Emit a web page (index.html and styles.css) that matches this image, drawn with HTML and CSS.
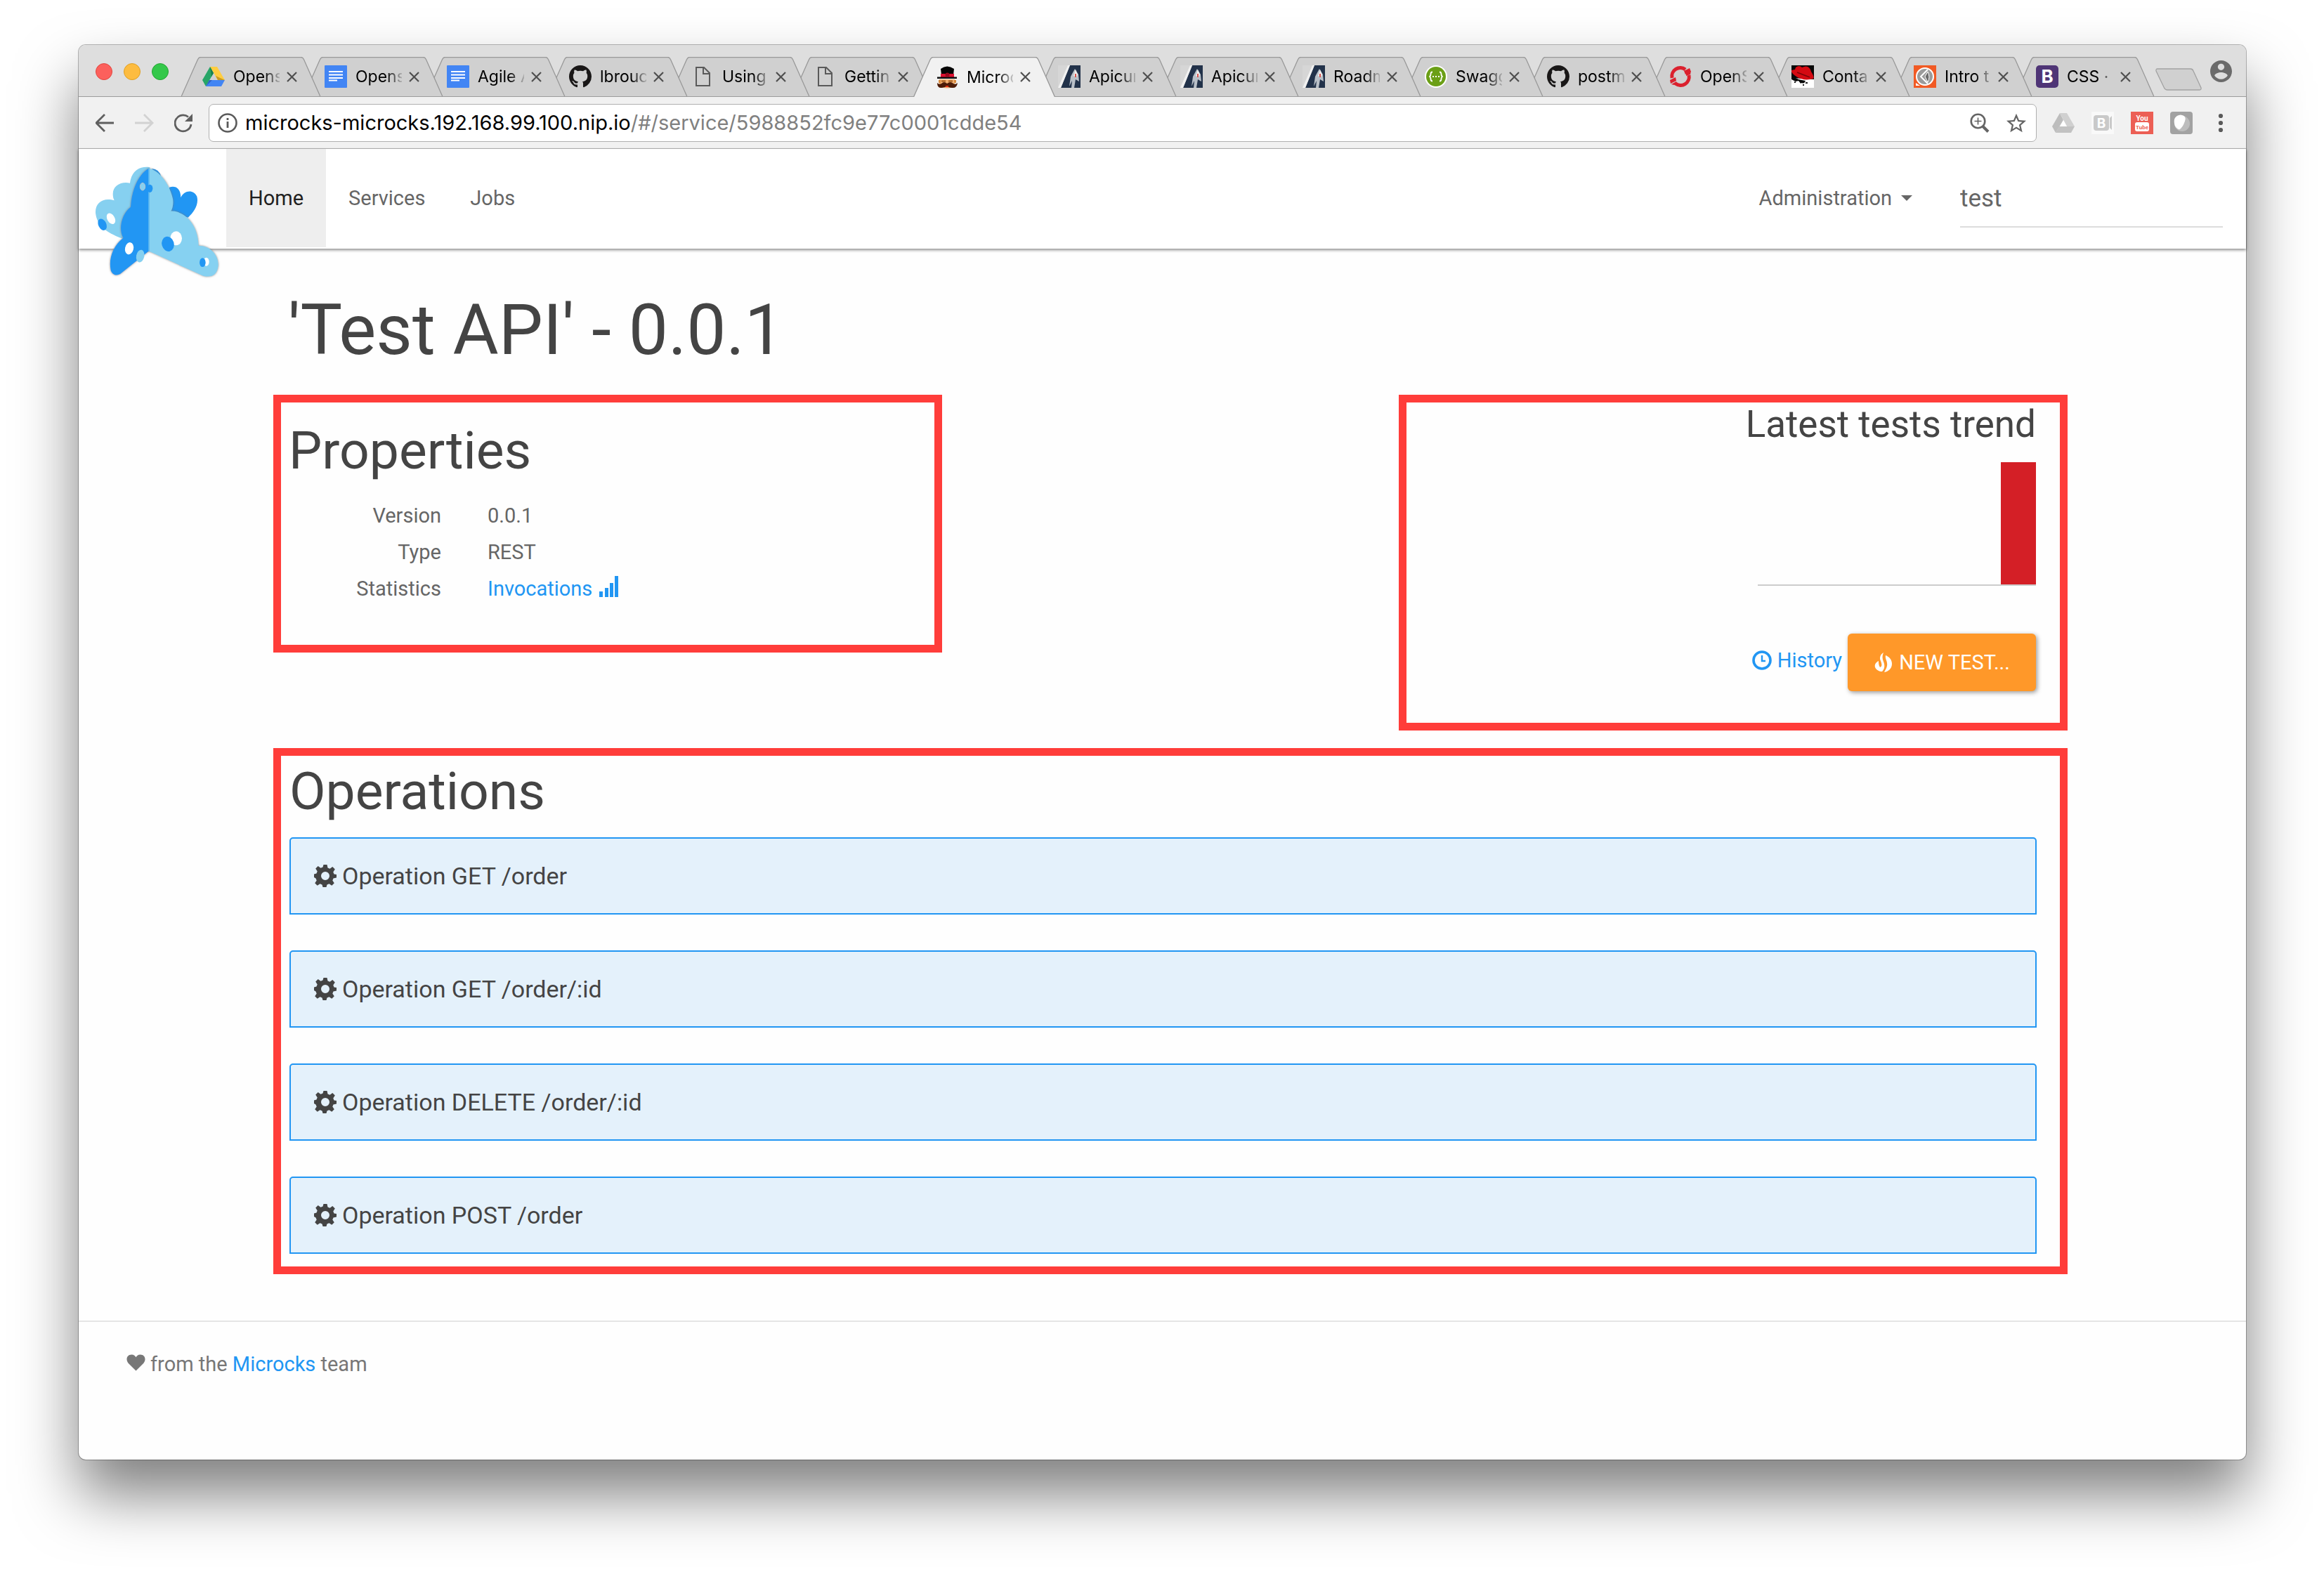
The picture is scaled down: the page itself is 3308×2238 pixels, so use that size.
FILE: index.html
```html
<!DOCTYPE html>
<html lang="en">
<head>
<meta charset="utf-8">
<title>Microcks</title>
<link rel="stylesheet" href="styles.css">
</head>
<body>
<svg class="defs" aria-hidden="true">
  <symbol id="tab-shape" viewBox="0 0 202 57"><path d="M.5 57 24 4Q25.500 .5 28 .5H174Q176.500 .5 178 4L201.500 57" stroke-width="1.300"/></symbol>
  <symbol id="close" viewBox="0 0 15 15"><path d="M1 1 14 14M14 1 1 14" stroke="#4f4f4f" stroke-width="2.200" fill="none"/></symbol>
  <symbol id="drive" viewBox="0 0 32 32"><path d="M11 2 0 21l5 9L16 11z" fill="#27a567"/><path d="M11 2h10l11 19H22z" fill="#ffcd40"/><path d="M10 21h22l-5 9H5z" fill="#4285f4"/><path d="M11 2 16 11l-3 5z" fill="#1b7f4d"/><path d="M19 15l13 6H22z" fill="#c99a22"/><path d="M5 30l5-9 4 0z" fill="#2d62c4"/></symbol>
  <symbol id="doc" viewBox="0 0 32 32"><rect width="32" height="32" rx="1" fill="#4285f4"/><path d="M6 9h20M6 13.500h20M6 18h20M6 21.500h12" stroke="#fff" stroke-width="2"/></symbol>
  <symbol id="github" viewBox="0 0 16 16"><path fill="#191717" d="M8 0C3.58 0 0 3.58 0 8c0 3.54 2.29 6.53 5.47 7.590.4.07.55-.17.55-.38 0-.19-.01-.82-.01-1.490-2.010.37-2.530-.49-2.690-.94-.09-.23-.48-.94-.82-1.130-.28-.15-.68-.52-.01-.53.63-.01 1.080.58 1.230.82.72 1.210 1.870.87 2.330.66.07-.52.28-.87.51-1.070-1.780-.2-3.640-.89-3.640-3.950 0-.87.31-1.590.82-2.150-.08-.2-.36-1.020.08-2.120 0 0 .67-.21 2.200.82.64-.18 1.320-.27 2-.27s1.360.09 2 .27c1.530-1.040 2.200-.82 2.200-.82.44 1.100.16 1.920.08 2.120.51.56.82 1.270.82 2.150 0 3.070-1.870 3.750-3.650 3.950.29.25.54.73.54 1.480 0 1.070-.01 1.930-.01 2.200 0 .21.15.46.55.38A8.010 8.010 0 0 0 16 8c0-4.420-3.580-8-8-8z"/></symbol>
  <symbol id="file" viewBox="0 0 32 32"><path d="M7 3h11l8 8v18H7zM17 3v9h9" fill="none" stroke="#5a5a5a" stroke-width="2"/></symbol>
  <symbol id="mustache" viewBox="0 0 32 32"><path d="M5 19h22v8q-5 5-11 4.500Q10 32 5 27z" fill="#f0b072"/><path d="M7 4q9-7 19 0l-1 9H8z" fill="#050505"/><path d="M7 11h19v5H7z" fill="#dc1030"/><path d="M2 15.500h28v2.500H2z" fill="#111"/><circle cx="16.500" cy="12.500" r="3" fill="#9a0a1e"/><path d="M4 20h3v4H4zM26 20h3v4h-3z" fill="#d98a3c"/><path d="M8 21.500h6M18 21.500h6" stroke="#a05a1c" stroke-width="2"/><path d="M16 25q5-4 9 0 3 2 6-1-1 8-8 7-5 0-7-3-3 3-7 3-7 1-7-7 3 3 6 1 4-4 8 0z" fill="#4c1c08"/><path d="M14 28h4v2h-4z" fill="#e03018"/></symbol>
  <symbol id="apicurio" viewBox="0 0 32 32"><path d="M0 0h32v32H0z" fill="#d6d6d6"/><path d="M17 0h15v32H4z" fill="#22324a"/><path d="M17 0h-3L0 32h4z" fill="#f1f1f1"/><path d="M24 5l5 8 1 10-5-3-2 12h-4l1-10-4 8 2-14q2-4 6-11z" fill="#b9c0c8"/><path d="M25 6l3 7-2 4-4-2z" fill="#eee"/><path d="M25 12v5" stroke="#d9534f" stroke-width="2"/></symbol>
  <symbol id="swagger" viewBox="0 0 32 32"><circle cx="16" cy="16" r="16" fill="#fff"/><circle cx="16" cy="16" r="14" fill="#6b9f16"/><path d="M11 9.500q-2.500 0-2.500 3t-2 3.500q2 .5 2 3.500t2.500 3M21 9.500q2.500 0 2.500 3t2 3.500q-2 .5-2 3.500t-2.500 3" fill="none" stroke="#fff" stroke-width="1.800"/><path d="M11 16h2M15 16h2M19 16h2" stroke="#fff" stroke-width="2"/></symbol>
  <symbol id="openshift" viewBox="0 0 32 32"><path d="M4 18A12 12 0 0 1 23 6M28 14A12 12 0 0 1 9 26" fill="none" stroke="#db212e" stroke-width="5"/><path d="M21 8l8-4 2 5-8 4zM24 11l7-3-1 5-6 2z" fill="#db212e"/><path d="M1 21l8-4 1 5-8 4zM3 27l7-4 2 4-5 1z" fill="#db212e"/></symbol>
  <symbol id="redhat" viewBox="0 0 32 32"><path d="M0 0h32v32H0z" fill="#080808"/><path d="M0 18l32 2v12H0z" fill="#fff"/><path d="M6 3q5-4 9 0 10-5 13 6 5 8 3 10-13 4-24-3-8-5-7-9l5-1z" fill="#d40a12"/><path d="M8 10l18 7" stroke="#7a0508" stroke-width="1.500"/><path d="M0 15l10 5 10 2-2 4-4-1-2 3-3-4-6-1-3-3z" fill="#080808"/><path d="M0 20l6 3 4-1 4 5 6-3 2 8H0z" fill="#fff"/><path d="M4 23h2v2H4zM16 27h2v2h-2zM20 24h3v2h-3z" fill="#222"/></symbol>
  <symbol id="intro" viewBox="0 0 32 32"><path d="M0 0h32v32H0z" fill="#f15a24"/><circle cx="16" cy="16" r="12" fill="#9b9b9b" stroke="#fff" stroke-width="2"/><path d="M20 6 10 16l10 10" fill="none" stroke="#fff" stroke-width="2"/><path d="M20 9l-4 7 4 8q4-7 0-15z" fill="#6b6b6b" stroke="#fff"/><path d="M3 25l6 4H3z" fill="#fff"/></symbol>
  <symbol id="cog" viewBox="0 0 32 32"><path fill="currentColor" fill-rule="evenodd" d="M13.500 0h5l1 4.500 3 1.200 3.800-2.600 3.500 3.500-2.500 3.900 1.200 3L32 14v4.500l-4.500 1-1.200 3 2.500 3.800-3.500 3.500-3.800-2.500-3 1.200-1 3.500h-5l-1-3.500-3-1.200-3.800 2.500-3.500-3.500 2.500-3.800-1.200-3L0 18v-4.500l3.500-1 1.200-3-2.500-3.900 3.500-3.500 3.800 2.600 3-1.200zM16 10a6 6 0 1 0 0 12 6 6 0 0 0 0-12z"/></symbol>
</svg>

<div class="window">
  <header class="chrome">
    <div class="tabstrip">
      <div class="lights"><span class="light red"></span><span class="light amber"></span><span class="light green"></span></div>
      <ul class="tabs">
        <li class="tab" style="z-index:16"><svg class="shape"><use href="#tab-shape"/></svg><svg class="fav"><use href="#drive"/></svg><span class="title">Opens</span><button class="close" aria-label="Close tab"><svg><use href="#close"/></svg></button></li>
        <li class="tab" style="z-index:15"><svg class="shape"><use href="#tab-shape"/></svg><svg class="fav"><use href="#doc"/></svg><span class="title">Opens</span><button class="close" aria-label="Close tab"><svg><use href="#close"/></svg></button></li>
        <li class="tab" style="z-index:14"><svg class="shape"><use href="#tab-shape"/></svg><svg class="fav"><use href="#doc"/></svg><span class="title">Agile A</span><button class="close" aria-label="Close tab"><svg><use href="#close"/></svg></button></li>
        <li class="tab" style="z-index:13"><svg class="shape"><use href="#tab-shape"/></svg><svg class="fav"><use href="#github"/></svg><span class="title">lbrouc</span><button class="close" aria-label="Close tab"><svg><use href="#close"/></svg></button></li>
        <li class="tab" style="z-index:12"><svg class="shape"><use href="#tab-shape"/></svg><svg class="fav"><use href="#file"/></svg><span class="title">Using</span><button class="close" aria-label="Close tab"><svg><use href="#close"/></svg></button></li>
        <li class="tab" style="z-index:11"><svg class="shape"><use href="#tab-shape"/></svg><svg class="fav"><use href="#file"/></svg><span class="title">Gettin</span><button class="close" aria-label="Close tab"><svg><use href="#close"/></svg></button></li>
        <li class="tab active" style="z-index:20"><svg class="shape"><use href="#tab-shape"/></svg><svg class="fav"><use href="#mustache"/></svg><span class="title">Microc</span><button class="close" aria-label="Close tab"><svg><use href="#close"/></svg></button></li>
        <li class="tab" style="z-index:9"><svg class="shape"><use href="#tab-shape"/></svg><svg class="fav"><use href="#apicurio"/></svg><span class="title">Apicur</span><button class="close" aria-label="Close tab"><svg><use href="#close"/></svg></button></li>
        <li class="tab" style="z-index:8"><svg class="shape"><use href="#tab-shape"/></svg><svg class="fav"><use href="#apicurio"/></svg><span class="title">Apicur</span><button class="close" aria-label="Close tab"><svg><use href="#close"/></svg></button></li>
        <li class="tab" style="z-index:7"><svg class="shape"><use href="#tab-shape"/></svg><svg class="fav"><use href="#apicurio"/></svg><span class="title">Roadm</span><button class="close" aria-label="Close tab"><svg><use href="#close"/></svg></button></li>
        <li class="tab" style="z-index:6"><svg class="shape"><use href="#tab-shape"/></svg><svg class="fav"><use href="#swagger"/></svg><span class="title">Swagg</span><button class="close" aria-label="Close tab"><svg><use href="#close"/></svg></button></li>
        <li class="tab" style="z-index:5"><svg class="shape"><use href="#tab-shape"/></svg><svg class="fav"><use href="#github"/></svg><span class="title">postm</span><button class="close" aria-label="Close tab"><svg><use href="#close"/></svg></button></li>
        <li class="tab" style="z-index:4"><svg class="shape"><use href="#tab-shape"/></svg><svg class="fav"><use href="#openshift"/></svg><span class="title">OpenS</span><button class="close" aria-label="Close tab"><svg><use href="#close"/></svg></button></li>
        <li class="tab" style="z-index:3"><svg class="shape"><use href="#tab-shape"/></svg><svg class="fav"><use href="#redhat"/></svg><span class="title">Conta</span><button class="close" aria-label="Close tab"><svg><use href="#close"/></svg></button></li>
        <li class="tab" style="z-index:2"><svg class="shape"><use href="#tab-shape"/></svg><svg class="fav"><use href="#intro"/></svg><span class="title">Intro t</span><button class="close" aria-label="Close tab"><svg><use href="#close"/></svg></button></li>
        <li class="tab" style="z-index:1"><svg class="shape"><use href="#tab-shape"/></svg><svg class="fav" viewBox="0 0 32 32"><rect width="32" height="32" rx="5" fill="#4f3576"/><text x="16" y="25" text-anchor="middle" class="b-mark">B</text></svg><span class="title">CSS ·</span><button class="close" aria-label="Close tab"><svg><use href="#close"/></svg></button></li>
      </ul>
      <button class="newtab" aria-label="New tab"><svg viewBox="0 0 66 32"><path d="M3 1H50Q53 1 54 4L65 28Q65.500 31 63 31H17Q14 31 12.500 28L1 4Q.5 1 3 1z" fill="#d0d0d0" stroke="#a2a2a2" stroke-width="1.300"/></svg></button>
      <button class="account" aria-label="Account"><svg viewBox="2 2 20 20"><path fill="#6b6b6b" d="M12 2C6.480 2 2 6.480 2 12s4.480 10 10 10 10-4.480 10-10S17.520 2 12 2zm0 3c1.660 0 3 1.340 3 3s-1.340 3-3 3-3-1.340-3-3 1.340-3 3-3zm0 14.200c-2.500 0-4.710-1.280-6-3.220.03-1.990 4-3.080 6-3.080 1.990 0 5.970 1.090 6 3.080-1.290 1.940-3.500 3.220-6 3.220z"/></svg></button>
    </div>
    <div class="toolbar">
      <button class="tool" aria-label="Back"><svg viewBox="0 0 28 28"><path d="M26 14H2M13 2 1 14l12 12" fill="none" stroke="#5f5f5f" stroke-width="2.800"/></svg></button>
      <button class="tool" aria-label="Forward" disabled><svg viewBox="0 0 28 28"><path d="M0 14h24M13 2l12 12-12 12" fill="none" stroke="#d2d2d2" stroke-width="2.800"/></svg></button>
      <button class="tool" aria-label="Reload"><svg viewBox="0 0 28 28"><path d="M24 16A11.500 11.500 0 1 1 20 5.500" fill="none" stroke="#5f5f5f" stroke-width="2.800"/><path d="M26 1v11H15z" fill="#5f5f5f"/></svg></button>
      <div class="omnibox">
        <svg class="info" viewBox="0 0 28 28"><circle cx="14" cy="14" r="12.500" fill="none" stroke="#5a5a5a" stroke-width="2.600"/><path d="M14 7v3M14 12v9" stroke="#5a5a5a" stroke-width="2.800"/></svg>
        <div class="url" role="textbox" aria-label="Address" contenteditable="true" spellcheck="false">microcks-microcks.192.168.99.100.nip.io<span class="path">/#/service/5988852fc9e77c0001cdde54</span></div>
        <button class="inbox" aria-label="Zoom"><svg viewBox="0 0 28 28"><circle cx="11.500" cy="11.500" r="9.800" fill="none" stroke="#646464" stroke-width="2.600"/><path d="M11.500 6.500v10M6.500 11.500h10" stroke="#646464" stroke-width="1.600"/><path d="M18 18.500l8 8" stroke="#646464" stroke-width="4"/></svg></button>
        <button class="inbox" aria-label="Bookmark this page"><svg viewBox="2 2 20 19"><path fill="#646464" d="M22 9.240l-7.190-.62L12 2 9.190 8.630 2 9.240l5.460 4.730L5.820 21 12 17.270 18.180 21l-1.630-7.030L22 9.240zM12 15.400l-3.760 2.270 1-4.280-3.320-2.880 4.380-.38L12 6.100l1.710 4.040 4.380.38-3.320 2.880 1 4.280L12 15.400z"/></svg></button>
      </div>
      <div class="extensions">
        <button class="ext" aria-label="Drive"><svg viewBox="0 0 32 32"><path d="M11 2 0 21l5 9L16 12z" fill="#bdbdbd"/><path d="M11 2h10l11 19H21z" fill="#d0d0d0"/><path d="M10 21h22l-5 9H5z" fill="#c2c2c2"/><path d="M16 12l-5 9h10z" fill="#fff"/></svg></button>
        <button class="ext" aria-label="BlueJeans"><svg viewBox="0 0 32 32"><path d="M0 0h32v32H0z" fill="#f9f9f9"/><rect x="3" y="5" width="22" height="22" rx="4" fill="#c9c9c9"/><path d="M26 9l3-3v20l-3-3z" fill="#c9c9c9"/><text x="14" y="23" text-anchor="middle" class="bj-mark">B</text></svg></button>
        <button class="ext" aria-label="YouTube"><svg viewBox="0 0 32 32"><path d="M0 0h32v32H0z" fill="#ec5f55"/><text x="16" y="13" text-anchor="middle" class="you">You</text><rect x="6" y="15" width="20" height="13" rx="3" fill="#fff"/><text x="16" y="25" text-anchor="middle" class="tube">Tube</text></svg></button>
        <button class="ext" aria-label="Extension"><svg viewBox="0 0 32 32"><rect width="32" height="32" rx="4" fill="#a2a2a2"/><circle cx="17" cy="17" r="11" fill="#bdbdbd"/><path d="M6 17Q4 6 15 4.500q9 1 6 9-3 9-8 12-6-2-7-8.500z" fill="#fff"/></svg></button>
        <button class="ext" aria-label="Menu"><svg viewBox="0 0 32 32"><g fill="#5a5a5a"><circle cx="16" cy="6" r="3.100"/><circle cx="16" cy="16" r="3.100"/><circle cx="16" cy="26" r="3.100"/></g></svg></button>
      </div>
    </div>
  </header>

  <nav class="navbar">
    <a class="brand" href="#/" aria-label="Microcks">
      <svg viewBox="0 0 600 528">
        <defs><filter id="edge" x="-10%" y="-10%" width="120%" height="120%"><feDropShadow dx="0" dy="0" stdDeviation="4" flood-color="#777" flood-opacity=".9"/></filter></defs>
        <path d="M262 31C225 24 183 42 177 98C140 90 104 108 104 145C104 155 106 165 110 172C65 158 28 180 30 225C35 275 70 308 145 335L250 300z" fill="#86d0f0"/>
        <ellipse cx="96" cy="250" rx="16" ry="25" transform="rotate(-30 96 250)" fill="#fff"/>
        <ellipse cx="59" cy="275" rx="17" ry="26" transform="rotate(-25 59 275)" fill="#2196f3"/>
        <path d="M270 36Q302 38 310 70L290 60zM345 116C375 105 394 125 394 160C408 128 448 124 463 155C472 190 450 222 425 245L345 222z" fill="#2196f3"/>
        <g filter="url(#edge)">
          <path d="M258 35C225 50 185 110 180 200C145 225 125 290 148 332C105 365 85 420 95 470C103 494 125 495 140 482L258 388z" fill="#2196f3"/>
          <path d="M256 35C300 40 345 100 360 165C363 185 360 205 352 218C400 215 468 265 470 365C520 365 556 405 554 450C550 492 525 502 490 494L256 388z" fill="#86d1f1"/>
        </g>
        <path d="M256 35h4v354l-4-1z" fill="#51b0f2"/>
        <ellipse cx="231" cy="113" rx="11" ry="16" fill="#86d0f0" stroke="#b9c4cc" stroke-width="3"/>
        <ellipse cx="262" cy="121" rx="12" ry="17" fill="#2196f3"/>
        <ellipse cx="374" cy="334" rx="25" ry="30" fill="#fff"/>
        <ellipse cx="339" cy="358" rx="26" ry="32" transform="rotate(-15 339 358)" fill="#2196f3"/>
        <ellipse cx="503" cy="434" rx="12" ry="18" fill="#fff"/>
        <ellipse cx="487" cy="437" rx="13" ry="19" fill="#2196f3"/>
        <ellipse cx="174" cy="377" rx="18" ry="26" transform="rotate(12 174 377)" fill="#fff"/>
        <ellipse cx="221" cy="410" rx="17" ry="27" transform="rotate(12 221 410)" fill="#86d0f0"/>
      </svg>
    </a>
    <a class="nav-link current" href="#/">Home</a>
    <a class="nav-link" href="#/services">Services</a>
    <a class="nav-link" href="#/jobs">Jobs</a>
    <a class="nav-link admin" href="#/admin">Administration <svg class="caret" viewBox="0 0 16 8"><path d="M0 0h16L8 8z" fill="currentColor"/></svg></a>
    <input class="search" type="text" aria-label="Search" value="test">
  </nav>

  <main class="content">
    <h1 class="page-title">'Test API' - 0.0.1</h1>
    <div class="summary">
      <section class="outlined properties">
        <h2 class="heading">Properties</h2>
        <dl class="facts">
          <dt>Version</dt><dd>0.0.1</dd>
          <dt>Type</dt><dd>REST</dd>
          <dt>Statistics</dt><dd><a class="link" href="#/stats">Invocations <svg class="signal" viewBox="0 0 28 30"><path d="M0 22h5v8H0zM8 17h5v13H8zM15 10h5v20h-5zM22 0h5v30h-5z" fill="currentColor"/></svg></a></dd>
        </dl>
      </section>
      <section class="outlined trend">
        <h3 class="subheading">Latest tests trend</h3>
        <div class="chart"><div class="bar"></div></div>
        <div class="actions">
          <a class="link history" href="#/history"><svg class="glyph" viewBox="0 0 28 28"><circle cx="14" cy="14" r="12" fill="none" stroke="currentColor" stroke-width="3.600"/><path d="M14 7v8h5" fill="none" stroke="currentColor" stroke-width="2.400"/></svg>History</a>
          <button class="new-test"><svg class="glyph" viewBox="0 0 28 28"><path fill="currentColor" d="M14 0C9 3 8 8 10 12C12 17 12 20 9 21C7 18 7 15 7 12C3 14 1 17 2 21C4 25 8 27 12 27C16 23 16 18 14 13C12 9 12 4 14 0zM17 4C16 8 19 12 19 15C20 20 17 24 15 28C21 27 26 23 26 16C26 10 22 6 17 4z"/></svg>NEW TEST...</button>
        </div>
      </section>
    </div>
    <section class="outlined operations">
      <h2 class="heading">Operations</h2>
      <ul class="panels">
        <li class="panel"><svg class="cog"><use href="#cog"/></svg>Operation GET /order</li>
        <li class="panel"><svg class="cog"><use href="#cog"/></svg>Operation GET /order/:id</li>
        <li class="panel"><svg class="cog"><use href="#cog"/></svg>Operation DELETE /order/:id</li>
        <li class="panel"><svg class="cog"><use href="#cog"/></svg>Operation POST /order</li>
      </ul>
    </section>
  </main>

  <footer class="footer"><svg class="heart" viewBox="0 0 28 24"><path d="M14 24 3 13C-2 7 1 0 7.500 0 11 0 13 2 14 4 15 2 17 0 20.500 0 27 0 30 7 25 13z" fill="currentColor"/></svg><p>from the <a class="link" href="#/team">Microcks</a> team</p></footer>
</div>
</body>
</html>
```
FILE: styles.css
```css
* { box-sizing: border-box; }

body {
  margin: 0;
  min-height: 100vh;
  padding: 64px 111px 160px 112px;
  display: flex;
  flex-direction: column;
  background: #fff;
  color: #666;
  font: 29px/40px Roboto, sans-serif;
}

.defs { position: absolute; width: 0; height: 0; }
svg { display: block; flex: none; }
button { border: 0; padding: 0; background: none; font: inherit; color: inherit; }
h1, h2, h3, ul, dl, dd, p { margin: 0; padding: 0; font-weight: 400; }
ul { list-style: none; }

.window {
  flex: 1;
  display: flex;
  flex-direction: column;
  background: #fefefe;
  border-radius: 10px;
  box-shadow: 0 0 0 1px rgba(0, 0, 0, .28), 0 50px 86px rgba(0, 0, 0, .5);
}

/* Browser chrome */
.chrome { font-family: Inter, sans-serif; }

.tabstrip {
  display: flex;
  height: 74px;
  padding: 17px 20px 0 24px;
  background: #dedede;
  border-bottom: 1px solid #9c9c9c;
  border-radius: 10px 10px 0 0;
}

.lights { display: flex; gap: 16px; width: 120px; padding-top: 9px; }
.light { width: 24px; height: 24px; border-radius: 50%; border: 1px solid; }
.red { background: #fc605c; border-color: #e2463f; }
.amber { background: #fdbc40; border-color: #dfa023; }
.green { background: #34c84a; border-color: #24a532; }

.tabs { display: flex; flex: 0 1 2812px; min-width: 0; isolation: isolate; }

.tab {
  position: relative;
  display: flex;
  align-items: center;
  flex: 0 1 202px;
  height: 56px;
  margin-right: -28px;
  padding-left: 32px;
}
.tab:last-child { margin-right: 0; }
.shape {
  position: absolute;
  inset: 0;
  width: 202px;
  height: 56px;
  fill: #d0d0d0;
  stroke: #989898;
}
.active { height: 57px; }
.active .shape { height: 57px; fill: #f1f1f1; }
.fav { position: relative; width: 32px; height: 32px; }
.title {
  position: relative;
  width: 66px;
  margin-left: 12px;
  overflow: hidden;
  white-space: nowrap;
  font-size: 23px;
  line-height: 32px;
  color: #000;
  mask-image: linear-gradient(to right, #000 44px, transparent 70px);
}
.close { position: relative; width: 15px; height: 15px; margin-left: 10px; }
.close svg { width: 15px; height: 15px; }
.b-mark { font: 700 26px Inter, sans-serif; fill: #fff; }

.newtab { width: 66px; height: 32px; margin-top: 16px; }
.newtab svg { width: 66px; height: 32px; }
.account { width: 31px; height: 31px; margin: 5px 0 0 auto; }
.account svg { width: 31px; height: 31px; }

.toolbar {
  display: flex;
  align-items: center;
  height: 74px;
  padding: 0 20px 0 24px;
  background: #f1f1f1;
  border-bottom: 1px solid #b4b4b4;
}
.tool { width: 28px; height: 28px; margin-right: 28px; }
.tool svg { width: 28px; height: 28px; }
.omnibox {
  display: flex;
  align-items: center;
  flex: 1;
  height: 54px;
  margin-left: -7px;
  padding: 0 14px 0 12px;
  background: #fff;
  border: 1px solid #b0b0b0;
  border-radius: 7px;
}
.info { width: 28px; height: 28px; }
.url {
  flex: 1;
  margin-left: 11px;
  white-space: nowrap;
  font-size: 29px;
  color: #000;
}
.path { color: #808080; }
.inbox { width: 28px; height: 28px; margin-left: 24px; }
.inbox svg { width: 28px; height: 28px; }
.extensions { display: flex; gap: 24px; padding-left: 22px; }
.ext { width: 32px; height: 32px; }
.ext svg { width: 32px; height: 32px; }
.bj-mark { font: 700 19px Inter, sans-serif; fill: #fff; }
.you, .tube { font: 700 10px Roboto, sans-serif; fill: #fff; }
.tube { font-size: 8px; fill: #ec5f55; }

/* Application navigation */
.navbar {
  position: relative;
  display: flex;
  height: 142px;
  padding-right: 33px;
  background: #fff;
  box-shadow: 0 2px 4px rgba(0, 0, 0, .45);
}
.brand { width: 210px; padding: 16px 0 0 14px; }
.brand svg { width: 200px; height: 176px; }
.nav-link {
  height: 140px;
  padding: 0 32px;
  line-height: 140px;
  color: #666;
  text-decoration: none;
}
.current { background: #eee; color: #212121; }
.admin { display: flex; align-items: center; gap: 13px; margin-left: auto; padding-right: 68px; }
.caret { width: 16px; height: 8px; }
.search {
  align-self: center;
  width: 374px;
  height: 82px;
  padding: 0;
  border: 0;
  border-bottom: 2px solid #ddd;
  background: none;
  color: #666;
  font: 35px/40px Roboto, sans-serif;
  outline: 0;
}

/* Service page */
.content { padding: 61px 254px 66px 277px; color: #444; }
.page-title { padding-left: 21px; margin-bottom: 37px; font-size: 100px; line-height: 110px; }
.outlined { border: 11px solid #ff3d3a; }
.heading { font-size: 75px; line-height: 82px; }
.summary {
  display: flex;
  justify-content: space-between;
  align-items: flex-start;
  margin-bottom: 25px;
}
.properties, .trend { flex: 0 1 952px; }
.properties { padding: 27px 12px 54px 11px; }
.facts {
  display: grid;
  grid-template-columns: 217px 1fr;
  column-gap: 66px;
  margin-top: 26px;
  line-height: 52px;
  color: #666;
}
.facts dt { text-align: right; }
.link { color: #2196f3; text-decoration: none; }
.signal { display: inline-block; width: 28px; height: 30px; margin-left: 3px; vertical-align: -2px; }

.trend {
  display: flex;
  flex-direction: column;
  align-items: flex-end;
  padding: 2px 34px 45px;
}
.subheading { font-size: 53px; line-height: 58px; }
.chart {
  display: flex;
  justify-content: flex-end;
  width: 396px;
  height: 176px;
  margin: 25px 0 68px;
  border-bottom: 2px solid #ccc;
}
.bar { width: 50px; background: #d41f26; }
.actions { display: flex; gap: 8px; }
.glyph { width: 28px; height: 28px; }
.history { display: flex; align-items: center; gap: 8px; height: 76px; }
.new-test {
  display: flex;
  align-items: center;
  justify-content: center;
  gap: 8px;
  width: 268px;
  height: 82px;
  border-radius: 6px;
  background: #ff9829;
  box-shadow: 2px 2px 6px rgba(0, 0, 0, .4);
  color: #fff;
}

.operations { padding: 9px 33px 18px 12px; }
.panels { display: grid; gap: 51px; margin-top: 25px; }
.panel {
  display: flex;
  align-items: center;
  gap: 8px;
  height: 110px;
  padding: 0 33px;
  background: #e4f1fb;
  border: 2px solid #2196f3;
  border-radius: 5px 5px 0 0;
  font-size: 34px;
}
.cog { width: 32px; height: 32px; }

.footer {
  display: flex;
  align-items: flex-start;
  gap: 7px;
  padding: 40px 68px;
  border-top: 2px solid #e5e5e5;
  color: #777;
}
.heart { width: 27px; height: 24px; margin-top: 6px; }
```
